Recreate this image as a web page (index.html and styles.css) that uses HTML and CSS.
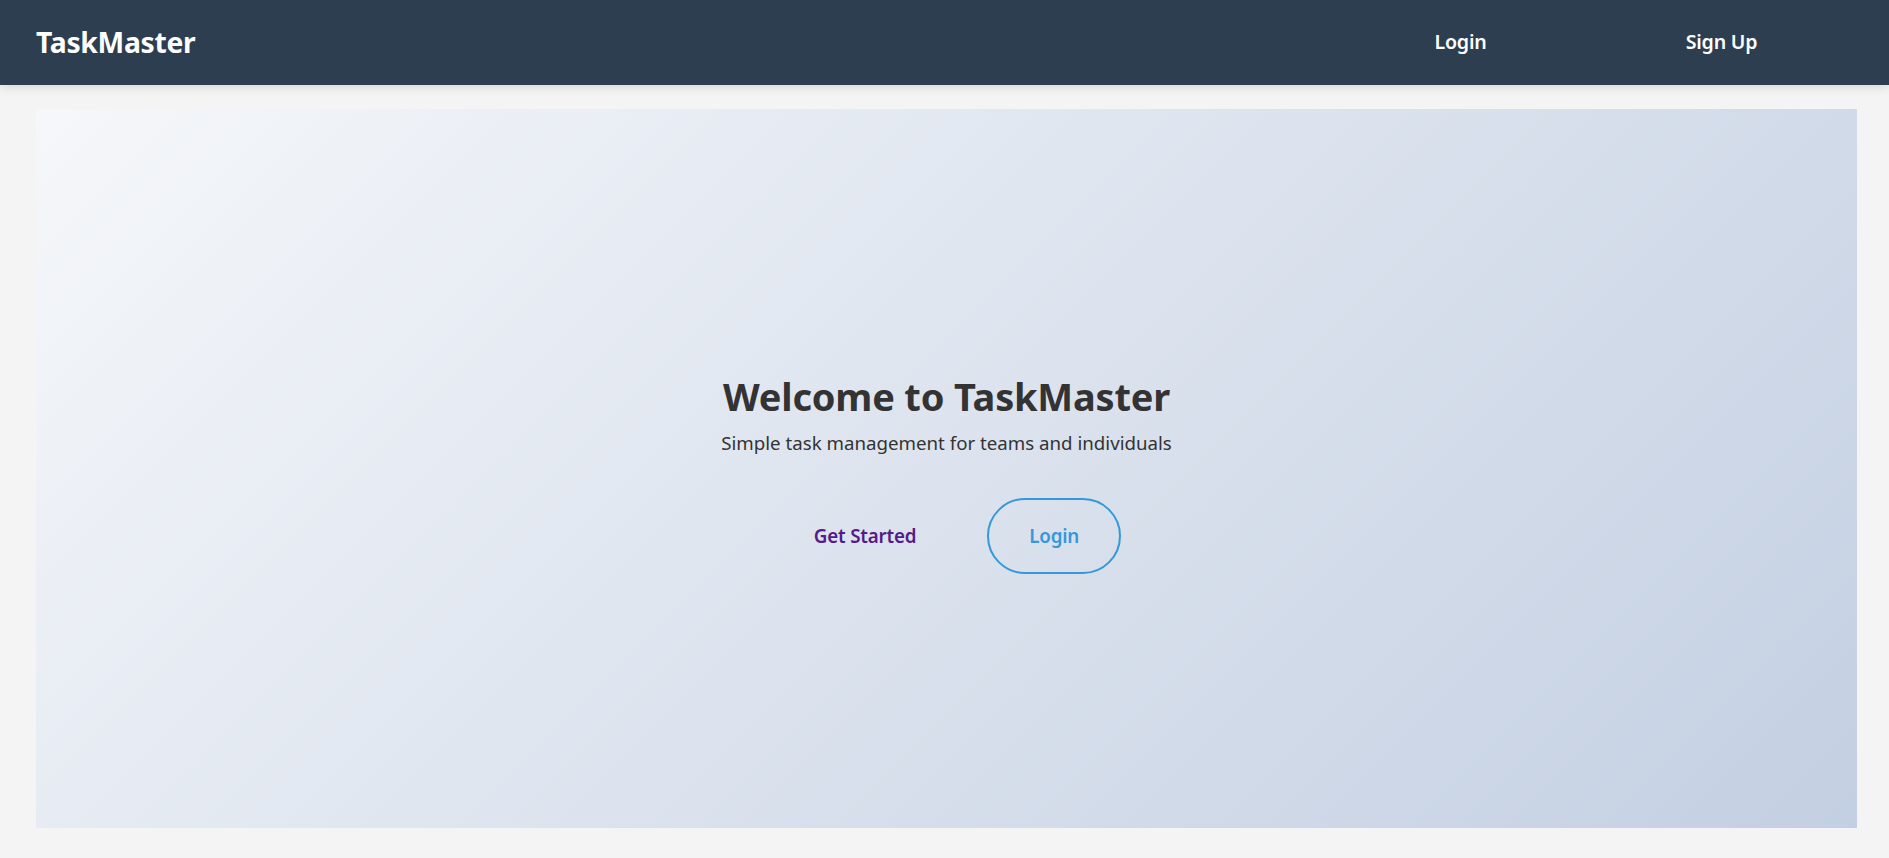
FILE: index.html
```html
<!DOCTYPE html>
<html lang="en">
<head>
<meta charset="utf-8">
<title>TaskMaster</title>
<link rel="stylesheet" href="styles.css">
</head>
<body>
<header class="site-header">
  <div class="logo">TaskMaster</div>
  <nav class="nav">
    <a class="nav-link" href="#">Login</a>
    <a class="nav-link" href="#">Sign Up</a>
  </nav>
</header>
<main class="main">
  <section class="hero">
    <h1 class="hero-title">Welcome to TaskMaster</h1>
    <p class="hero-sub">Simple task management for teams and individuals</p>
    <div class="hero-actions">
      <a class="btn btn-primary" href="#">Get Started</a>
      <a class="btn btn-outline" href="#">Login</a>
    </div>
  </section>
</main>
</body>
</html>
```

FILE: styles.css
```css
* { box-sizing: border-box; }

html, body {
  margin: 0;
  padding: 0;
}

body {
  background: #f4f4f4;
  font-family: "Noto Sans", "Open Sans", "DejaVu Sans", sans-serif;
  color: #333;
}

.site-header {
  height: 85px;
  background: #2c3e50;
  display: flex;
  align-items: center;
  justify-content: space-between;
  padding: 0 37px 0 36px;
  box-shadow: 0 2px 10px rgba(0, 0, 0, 0.12);
  position: relative;
  z-index: 1;
}

.logo {
  color: #fff;
  font-weight: 700;
  font-size: 28.3px;
  letter-spacing: -0.3px;
  line-height: 1;
  padding-bottom: 1px;
}

.nav {
  display: flex;
}

.nav-link {
  width: 261px;
  text-align: center;
  color: #fff;
  text-decoration: none;
  font-weight: 600;
  font-size: 19.6px;
  letter-spacing: -0.2px;
  line-height: 1;
  padding-bottom: 2px;
}

.main {
  padding: 24px 32px 30px 36px;
}

.hero {
  height: 719px;
  background: linear-gradient(135deg, #f5f7fa 0%, #c3cfe2 100%);
  display: flex;
  flex-direction: column;
  align-items: center;
  justify-content: center;
  text-align: center;
  padding-top: 9px;
}

.hero-title {
  margin: 0;
  font-size: 38px;
  font-weight: 700;
  line-height: 48px;
  color: #333;
  letter-spacing: -0.2px;
}

.hero-sub {
  margin: 9px 0 0;
  font-size: 18.7px;
  line-height: 28px;
  color: #333;
}

.hero-actions {
  display: flex;
  gap: 29px;
  margin-top: 41px;
}

.btn {
  display: inline-block;
  padding: 24px 40px;
  border: 2px solid transparent;
  border-radius: 50px;
  font-size: 18.8px;
  font-weight: 600;
  line-height: 24px;
  text-decoration: none;
  letter-spacing: -0.2px;
}

.btn-primary {
  color: #551a8b;
}

.btn-outline {
  color: #3498db;
  border-color: #3498db;
}
```
